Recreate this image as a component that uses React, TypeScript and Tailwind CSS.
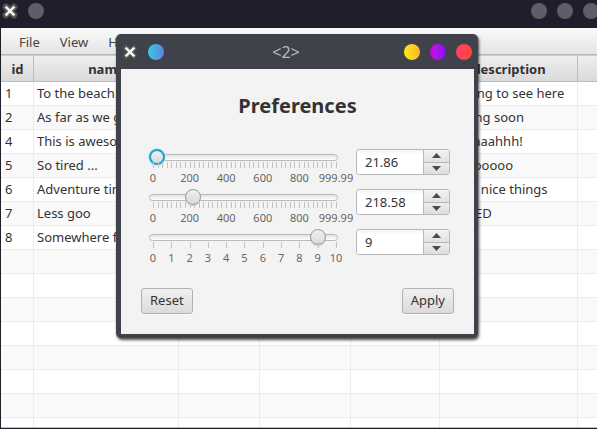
import { useState } from "react";

const entries = [
  { id: 1, name: "To the beach!", description: "Nothing to see here" },
  { id: 2, name: "As far as we go", description: "Coming soon" },
  { id: 4, name: "This is awesome", description: "Aaaaaaahhh!" },
  { id: 5, name: "So tired ...", description: "Soooooooo" },
  { id: 6, name: "Adventure time", description: "Some nice things" },
  { id: 7, name: "Less goo", description: "CLOSED" },
  { id: 8, name: "Somewhere far", description: "" },
];

const blankRows = [9, 10, 11, 12, 13, 14, 15, 16];

const thousand = ["0", "200", "400", "600", "800", "999.99"];
const ten = ["0", "1", "2", "3", "4", "5", "6", "7", "8", "9", "10"];

function CloseCross() {
  return (
    <svg className="size-4" viewBox="0 0 16 16" aria-hidden="true">
      <path d="M4 4l8 8M12 4l-8 8" stroke="#474748" strokeWidth="7" strokeLinecap="round" />
      <path d="M4 4l8 8M12 4l-8 8" stroke="#5a5a58" strokeWidth="5" strokeLinecap="round" />
      <path d="M3.600 3.600l8.800 8.800M12.400 3.600l-8.800 8.800" stroke="#f4f4f4" strokeWidth="2.500" />
    </svg>
  );
}

function Cell({ children }: { children?: React.ReactNode }) {
  return (
    <td className="h-6 overflow-hidden border-r border-b border-[#ececec] px-[3px] pt-0 pb-[2px] leading-5 whitespace-nowrap first:pl-1 last:border-r-0">
      {children}
    </td>
  );
}

type SettingProps = {
  label: string;
  max: number;
  step: number;
  initial: number;
  marks: string[];
  ticks: number;
  active?: boolean;
};

function Setting({ label, max, step, initial, marks, ticks, active }: SettingProps) {
  const [value, setValue] = useState(initial);
  const change = (next: number) => {
    if (!Number.isNaN(next)) setValue(Math.min(max, Math.max(0, Number(next.toFixed(2)))));
  };
  return (
    <div className="flex h-10 items-start justify-between">
      <div className="w-[199px]">
        <div className="grid h-4 items-center">
          <div className="col-start-1 row-start-1 mr-[6px] ml-1 h-[7px] rounded-full border border-[#b9b9b9] bg-linear-to-b from-[#e4e4e4] to-white" />
          <input
            type="range"
            aria-label={label}
            min={0}
            max={max}
            step={step}
            value={value}
            onChange={(e) => change(Number(e.target.value))}
            className={
              "col-start-1 row-start-1 m-0 h-4 w-full appearance-none bg-transparent outline-none [&::-webkit-slider-thumb]:size-4 [&::-webkit-slider-thumb]:appearance-none [&::-webkit-slider-thumb]:rounded-full [&::-webkit-slider-thumb]:bg-linear-to-b [&::-webkit-slider-thumb]:from-[#efefef] [&::-webkit-slider-thumb]:to-[#dadada] " +
              (active
                ? "[&::-webkit-slider-thumb]:border-2 [&::-webkit-slider-thumb]:border-[#1ba3d3] [&::-webkit-slider-thumb]:shadow-[0_0_1px_1px_#c5e6f2]"
                : "[&::-webkit-slider-thumb]:border [&::-webkit-slider-thumb]:border-[#999999] [&::-webkit-slider-thumb]:shadow-[0_1px_1px_#cccccc]")
            }
          />
        </div>
        <div className="-mt-[3px] mr-[7px] ml-2 flex justify-between">
          {Array.from({ length: ticks }, (_, i) => (
            <span key={i} className="h-[6px] w-px bg-[#c4c4c4]" />
          ))}
        </div>
        <div className="mx-2 mt-1 flex justify-between text-[11px] leading-3 text-[#666666]">
          {marks.map((m) => (
            <span key={m} className="flex w-0 justify-center">
              {m}
            </span>
          ))}
        </div>
      </div>
      <div className="flex h-[26px] w-[94px] overflow-hidden rounded-[3px] border border-[#b8b8b8] bg-white">
        <input
          type="text"
          aria-label={label + " value"}
          value={value}
          onChange={(e) => change(Number(e.target.value))}
          className="min-w-0 flex-1 bg-linear-to-b from-[#f4f4f4] to-white to-20% px-2 pt-px text-[#333333] outline-none"
        />
        <div className="flex w-[26px] flex-col border-l border-[#b8b8b8]">
          <button
            type="button"
            aria-label={"Increase " + label}
            onClick={() => change(value + 1)}
            className="flex flex-1 items-center justify-center border-b border-[#b8b8b8] bg-linear-to-b from-[#f2f2f2] to-[#e2e2e2]"
          >
            <svg className="h-[5px] w-[9px]" viewBox="0 0 9 5">
              <path d="M0 5L4.500 0L9 5z" fill="#4c4c4c" />
            </svg>
          </button>
          <button
            type="button"
            aria-label={"Decrease " + label}
            onClick={() => change(value - 1)}
            className="flex flex-1 items-center justify-center bg-linear-to-b from-[#eeeeee] to-[#dddddd]"
          >
            <svg className="h-[5px] w-[9px]" viewBox="0 0 9 5">
              <path d="M0 0L4.500 5L9 0z" fill="#4c4c4c" />
            </svg>
          </button>
        </div>
      </div>
    </div>
  );
}

function ActionButton({ children }: { children: string }) {
  return (
    <button
      type="button"
      className="h-[26px] rounded-[3px] border border-[#b2b2b2] bg-linear-to-b from-[#f0f0f0] to-[#dbdbdb] px-2 text-[#333333] shadow-[0_1px_0_#fbfbfb]"
    >
      {children}
    </button>
  );
}

function Preferences() {
  return (
    <section
      role="dialog"
      aria-labelledby="preferences-title"
      className="absolute top-[34px] left-[116px] w-[362px] rounded-[5px] bg-[#3f414b] pr-1 pb-1 pl-[5px] shadow-[1px_2px_3px_rgba(0,0,0,0.7)]"
    >
      <header className="flex h-[35px] items-center justify-between">
        <div className="flex items-center gap-[10px]">
          <button type="button" aria-label="Close" className="ml-px">
            <CloseCross />
          </button>
          <span className="size-4 rounded-full bg-linear-to-r from-[#35cbd8] to-[#5a82e4]" />
        </div>
        <span className="pl-1 text-base text-[#b9bac0]">&lt;2&gt;</span>
        <div className="flex items-center gap-[10px] pr-[2px]">
          <button type="button" aria-label="Shade" className="size-4 rounded-full bg-linear-to-r from-[#f8ee08] to-[#fdb02e]" />
          <button type="button" aria-label="Minimize" className="size-4 rounded-full bg-linear-to-r from-[#cc00d8] to-[#8c00ff]" />
          <button type="button" aria-label="Maximize" className="size-4 rounded-full bg-linear-to-r from-[#ff3d68] to-[#ff4b30]" />
        </div>
      </header>
      <div className="bg-[#f3f3f3] px-5 pt-[23px] pb-5">
        <h1 id="preferences-title" className="text-center text-[20px] leading-7 font-bold text-[#333333]">
          Preferences
        </h1>
        <div className="mt-[29px] pr-1 pl-1">
          <Setting label="Distance" max={999.99} step={0.01} initial={21.86} marks={thousand} ticks={41} active />
          <Setting label="Duration" max={999.99} step={0.01} initial={218.58} marks={thousand} ticks={41} />
          <Setting label="Rating" max={10} step={1} initial={9} marks={ten} ticks={11} />
        </div>
        <div className="mt-[19px] flex justify-between">
          <ActionButton>Reset</ActionButton>
          <ActionButton>Apply</ActionButton>
        </div>
      </div>
    </section>
  );
}

export default function App() {
  return (
    <div className="relative flex h-screen flex-col overflow-hidden bg-[#1e1f2b] pb-px pl-px font-['Noto_Sans',sans-serif] text-[13px] text-[#333333]">
      <header className="flex h-7 shrink-0 items-start justify-between pt-[3px]">
        <div className="flex items-center gap-[10px]">
          <button type="button" aria-label="Close window" className="ml-px">
            <CloseCross />
          </button>
          <span className="size-4 rounded-full bg-[#5e5e68]" />
        </div>
        <div className="-mr-[2px] flex items-center gap-[10px]">
          <button type="button" aria-label="Shade window" className="size-4 rounded-full bg-[#5e5e68]" />
          <button type="button" aria-label="Minimize window" className="size-4 rounded-full bg-[#5e5e68]" />
          <button type="button" aria-label="Maximize window" className="size-4 rounded-full bg-[#5e5e68]" />
        </div>
      </header>
      <nav className="flex h-[27px] shrink-0 items-center gap-5 border-b border-[#b5b5b5] bg-linear-to-b from-[#fafafa] to-[#e4e4e4] px-[18px] pt-[3px] text-[#444444]">
        <button type="button">File</button>
        <button type="button">View</button>
        <button type="button">Help</button>
      </nav>
      <main className="min-h-0 flex-1 overflow-hidden border-b border-[#c0c0c0] bg-white">
        <table className="w-full table-fixed border-separate border-spacing-0 border-t border-[#cccccc]">
          <colgroup>
            <col className="w-[33px]" />
            <col className="w-[145px]" />
            <col className="w-[81px]" />
            <col className="w-[91px]" />
            <col className="w-[89px]" />
            <col className="w-[138px]" />
            <col />
          </colgroup>
          <thead>
            <tr>
              {["id", "name", "", "", "", "description", ""].map((title, i) => (
                <th
                  key={i}
                  className="h-[26px] border-r border-b border-[#bdbdbd] bg-linear-to-b from-[#efefef] to-[#dadada] p-0 pl-px leading-5 font-bold last:border-r-0"
                >
                  {title}
                </th>
              ))}
            </tr>
          </thead>
          <tbody>
            {entries.map((e) => (
              <tr key={e.id} className="odd:bg-white even:bg-[#f9f9f9]">
                <Cell>{e.id}</Cell>
                <Cell>{e.name}</Cell>
                <Cell />
                <Cell />
                <Cell />
                <Cell>{e.description}</Cell>
                <Cell />
              </tr>
            ))}
            {blankRows.map((row) => (
              <tr key={row} className="odd:bg-white even:bg-[#f9f9f9]">
                <Cell />
                <Cell />
                <Cell />
                <Cell />
                <Cell />
                <Cell />
                <Cell />
              </tr>
            ))}
          </tbody>
        </table>
      </main>
      <Preferences />
    </div>
  );
}
